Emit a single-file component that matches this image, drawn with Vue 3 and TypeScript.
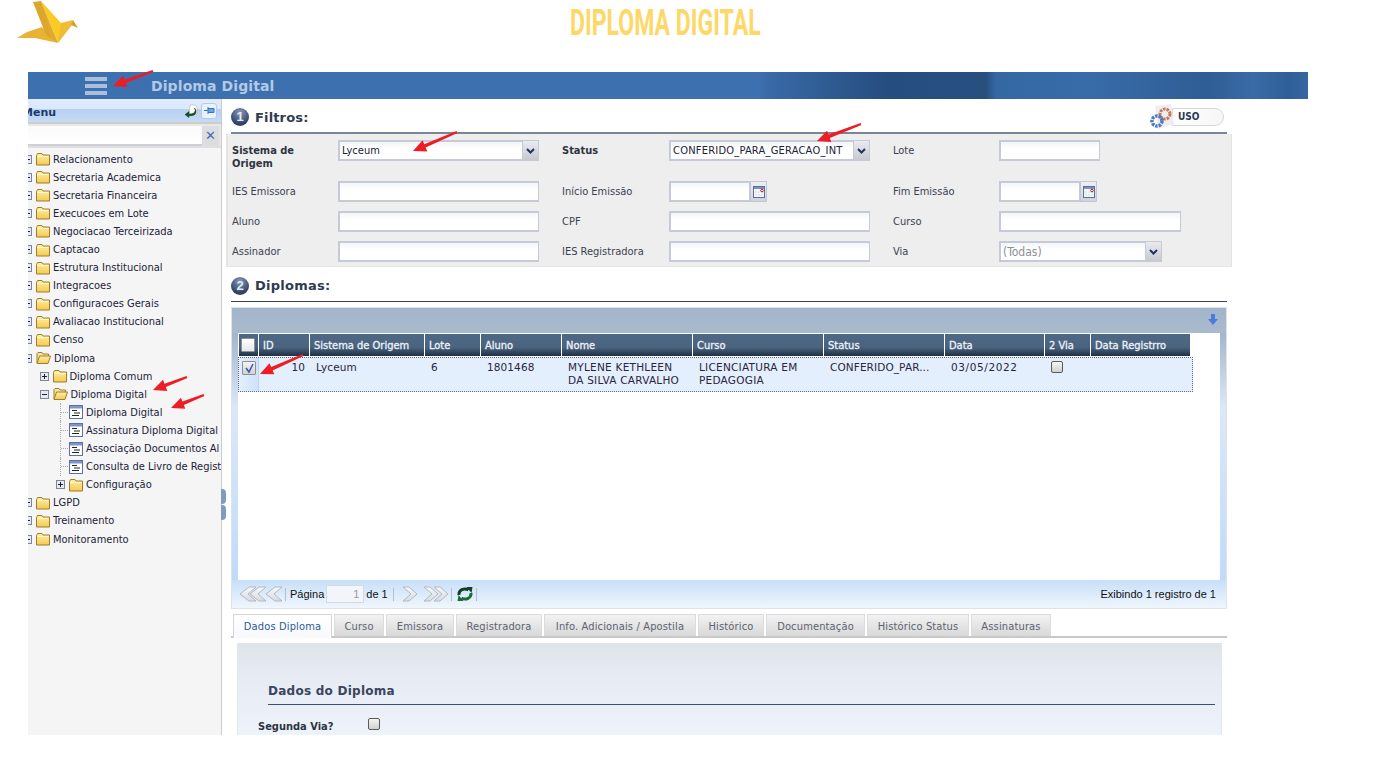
<script setup lang="ts">
interface TreeItem { label: string; level: number; kind: 'closed' | 'open' | 'doc' }
const tree: TreeItem[] = [
  ...['Relacionamento','Secretaria Academica','Secretaria Financeira','Execucoes em Lote','Negociacao Terceirizada','Captacao','Estrutura Institucional','Integracoes','Configuracoes Gerais','Avaliacao Institucional','Censo'].map(label => ({ label, level: 0, kind: 'closed' as const })),
  { label: 'Diploma', level: 0, kind: 'open' },
  { label: 'Diploma Comum', level: 1, kind: 'closed' },
  { label: 'Diploma Digital', level: 1, kind: 'open' },
  { label: 'Diploma Digital', level: 2, kind: 'doc' },
  { label: 'Assinatura Diploma Digital', level: 2, kind: 'doc' },
  { label: 'Associação Documentos Al', level: 2, kind: 'doc' },
  { label: 'Consulta de Livro de Registros', level: 2, kind: 'doc' },
  { label: 'Configuração', level: 2, kind: 'closed' },
  { label: 'LGPD', level: 0, kind: 'closed' },
  { label: 'Treinamento', level: 0, kind: 'closed' },
  { label: 'Monitoramento', level: 0, kind: 'closed' },
]
const headers = ['ID','Sistema de Origem','Lote','Aluno','Nome','Curso','Status','Data','2 Via','Data Registrro']
const tabs = [
  { t: 'Dados Diploma', w: 99 }, { t: 'Curso', w: 50 }, { t: 'Emissora', w: 68 }, { t: 'Registradora', w: 86 },
  { t: 'Info. Adicionais / Apostila', w: 152 }, { t: 'Histórico', w: 66 }, { t: 'Documentação', w: 99 },
  { t: 'Histórico Status', w: 102 }, { t: 'Assinaturas', w: 80 },
]
const arrows: [number, number, number, number][] = [
  [153, 71, 113, 86], [457, 132, 413, 151], [861, 124, 817, 141],
  [303, 355, 260, 374], [187, 377, 153, 390], [204, 395, 171, 408],
]
function arrowPoints(a: [number, number, number, number]): string {
  const [x1, y1, x2, y2] = a
  const len = Math.hypot(x2 - x1, y2 - y1)
  const ux = (x2 - x1) / len, uy = (y2 - y1) / len
  const nx = -uy, ny = ux
  const bx = x2 - ux * 13, by = y2 - uy * 13
  const p = (x: number, y: number) => `${x.toFixed(1)},${y.toFixed(1)}`
  return [
    p(x1 + nx * 1, y1 + ny * 1), p(bx + nx * 1.8, by + ny * 1.8), p(bx + nx * 6, by + ny * 6),
    p(x2, y2), p(bx - nx * 6, by - ny * 6), p(bx - nx * 1.8, by - ny * 1.8), p(x1 - nx * 1, y1 - ny * 1),
  ].join(' ')
}
</script>

<template>
  <div class="page">
    <svg class="defs" width="0" height="0">
      <defs>
        <linearGradient id="folderFill" x1="0" y1="0" x2="0" y2="1">
          <stop offset="0" stop-color="#fff0a8" />
          <stop offset="1" stop-color="#f5c94e" />
        </linearGradient>
        <linearGradient id="chev" x1="0" y1="0" x2="0" y2="1">
          <stop offset="0" stop-color="#f6f7f8" />
          <stop offset="1" stop-color="#d9dcdf" />
        </linearGradient>
      </defs>
    </svg>
    <header class="brand">
      <svg class="logo" width="62" height="44" viewBox="17 0 62 44">
        <polygon points="17,38 27,32 42,27 48,34 58,43 35,38" fill="#e9b235" />
        <polygon points="33,2 41,1 55,41 46,35" fill="#dca52b" />
        <polygon points="41,1 61,23 64,31 58,43" fill="#fbcb25" />
        <polygon points="41,1 58,43 51,39" fill="#e0aa2e" />
        <polygon points="58,43 61,23 73,20 72,25" fill="#f0bb36" />
        <polygon points="73,20 78,28 71,25" fill="#d79f2b" />
      </svg>
      <h1 class="brand-title"><span>DIPLOMA DIGITAL</span></h1>
    </header>

    <div class="app">
      <div class="topbar">
        <div class="burger"><i></i><i></i><i></i></div>
        <div class="topbar-title">Diploma Digital</div>
      </div>
      <div class="body">
        <aside class="side">
          <div class="side-head">
            <span class="side-title">Menu</span>
            <svg class="s-ico" width="14" height="14" viewBox="0 0 14 14"><path d="M6 1h5l2 2v7H5z" fill="#fff" stroke="#bbb" stroke-width=".7"/><path d="M10.500 4c2 4-1 6.500-5.500 6V7.500L1 10.500 5 13.500V11.500C10 12.500 14.500 9 10.500 4z" fill="#12561f" stroke="#0c3a15" stroke-width=".5"/></svg>
            <span class="pin"><svg width="11" height="9" viewBox="0 0 11 9"><path d="M4 1v7M4 2.500h6v4H4M0 4.500h4" stroke="#2e77c5" fill="#6ea5de" stroke-width="1"/></svg></span>
          </div>
          <div class="side-search">
            <div class="side-input"></div>
            <div class="side-x">✕</div>
          </div>
          <div class="tree">
            <div v-for="(n, i) in tree" :key="i" class="node" :style="{ paddingLeft: n.level * 16.5 + 'px' }">
              <svg v-if="n.kind !== 'doc'" class="exp" width="9" height="9" viewBox="0 0 9 9">
                <rect x=".5" y=".5" width="8" height="8" fill="#e6e9f2" stroke="#7c8599" />
                <path :d="n.kind === 'closed' ? 'M2 4.500h5M4.500 2v5' : 'M2 4.500h5'" stroke="#222" />
              </svg>
              <span v-else class="stem"></span>
              <svg v-if="n.kind === 'doc'" class="nicon" width="14" height="14" viewBox="0 0 14 14">
                <rect x=".5" y=".5" width="13" height="13" fill="#fff" stroke="#5c6fa8" />
                <rect x="1" y="1" width="12" height="2.500" fill="#7f95c9" />
                <path d="M3 5.500h5M5 8h6M3 10.500h7" stroke="#222" />
              </svg>
              <svg v-else-if="n.kind === 'closed'" class="nicon" width="14" height="14" viewBox="0 0 14 14">
                <path d="M.5 3.500 1.500 1.500H6L7 3H13.500V13H.5z" fill="url(#folderFill)" stroke="#9c7e2c" />
                <path d="M1.500 4.500H12.500" stroke="#fff8d0" />
              </svg>
              <svg v-else class="nicon" width="15" height="14" viewBox="0 0 15 14">
                <path d="M1 12V2.500L2 1.500H6L7 3H12.500V5" fill="#f6e3a4" stroke="#9c7e2c" />
                <path d="M1 12.500 3.500 5H14.500L12 12.500z" fill="url(#folderFill)" stroke="#9c7e2c" />
              </svg>
              <span class="nlabel">{{ n.label }}</span>
            </div>
          </div>
        </aside>

        <span class="grip"><i></i><i></i></span>

        <main class="main">
          <div class="sec-head filters-head">
            <span class="num">1</span><span class="sec-title t-filtros">Filtros:</span>
            <div class="uso">
              <svg class="uso-ico" width="28" height="26" viewBox="0 0 28 26">
                <path d="M5 2 21 0 24 20 8 25z" fill="#eceef2" />
                <circle cx="15" cy="10" r="5" fill="none" stroke="#c7765a" stroke-width="3" stroke-dasharray="2.500 1" />
                <circle cx="7" cy="17" r="5" fill="none" stroke="#4f78c0" stroke-width="3.500" stroke-dasharray="2.500 1" />
              </svg>
              <span class="uso-pill">USO</span>
            </div>
          </div>
          <section class="filters">
            <label class="lb strong">Sistema de Origem</label>
            <div class="sel w201"><span class="sel-text">Lyceum</span><span class="drop"><svg width="9" height="6" viewBox="0 0 9 6"><path d="M1 1 4.500 4.500 8 1" fill="none" stroke="#1c3466" stroke-width="2"/></svg></span></div>
            <label class="lb strong">Status</label>
            <div class="sel w201"><span class="sel-text spaced">CONFERIDO_PARA_GERACAO_INT</span><span class="drop"><svg width="9" height="6" viewBox="0 0 9 6"><path d="M1 1 4.500 4.500 8 1" fill="none" stroke="#1c3466" stroke-width="2"/></svg></span></div>
            <label class="lb">Lote</label>
            <div class="inp w101"></div>

            <label class="lb">IES Emissora</label>
            <div class="inp w201"></div>
            <label class="lb">Início Emissão</label>
            <div class="date"><div class="inp w81"></div><span class="cal"><svg width="12" height="12" viewBox="0 0 12 12"><rect x=".5" y=".5" width="11" height="11" fill="#fff" stroke="#5b6f96"/><rect x="1" y="1" width="10" height="2" fill="#7c93bc"/><path d="M3 3v8M6 3v8M9 3v8M1 6h10M1 9h10" stroke="#cdd4e2" stroke-width=".6"/><circle cx="9" cy="4.500" r="1.300" fill="#fff" stroke="#96202c"/></svg></span></div>
            <label class="lb">Fim Emissão</label>
            <div class="date"><div class="inp w81"></div><span class="cal"><svg width="12" height="12" viewBox="0 0 12 12"><rect x=".5" y=".5" width="11" height="11" fill="#fff" stroke="#5b6f96"/><rect x="1" y="1" width="10" height="2" fill="#7c93bc"/><path d="M3 3v8M6 3v8M9 3v8M1 6h10M1 9h10" stroke="#cdd4e2" stroke-width=".6"/><circle cx="9" cy="4.500" r="1.300" fill="#fff" stroke="#96202c"/></svg></span></div>

            <label class="lb">Aluno</label>
            <div class="inp w201"></div>
            <label class="lb">CPF</label>
            <div class="inp w201"></div>
            <label class="lb">Curso</label>
            <div class="inp w182"></div>

            <label class="lb">Assinador</label>
            <div class="inp w201"></div>
            <label class="lb">IES Registradora</label>
            <div class="inp w201"></div>
            <label class="lb">Via</label>
            <div class="sel w163"><span class="sel-text muted">(Todas)</span><span class="drop"><svg width="9" height="6" viewBox="0 0 9 6"><path d="M1 1 4.500 4.500 8 1" fill="none" stroke="#1c3466" stroke-width="2"/></svg></span></div>
          </section>

          <div class="sec-head diplomas-head">
            <span class="num">2</span><span class="sec-title t-diplomas">Diplomas:</span>
          </div>
          <section class="grid-panel">
            <div class="grid-top">
              <svg width="10" height="11" viewBox="0 0 10 11"><path d="M3 0h4v5h3L5 11 0 5h3z" fill="#4a7bdc"/></svg>
            </div>
            <div class="grid-body">
              <div class="thead cols">
                <div class="th th-check"><span class="cb head-cb"></span></div>
                <div v-for="h in headers" :key="h" class="th">{{ h }}</div>
              </div>
              <div class="trow cols">
                <div class="td td-check"><span class="cb"><svg width="11" height="11" viewBox="0 0 11 11"><path d="M2 5 5 9 9 1" fill="none" stroke="#3a5bb0" stroke-width="1.600"/></svg></span></div>
                <div class="td td-id">10</div>
                <div class="td">Lyceum</div>
                <div class="td">6</div>
                <div class="td">1801468</div>
                <div class="td td-wrap">MYLENE KETHLEEN DA SILVA CARVALHO</div>
                <div class="td td-wrap">LICENCIATURA EM PEDAGOGIA</div>
                <div class="td">CONFERIDO_PAR...</div>
                <div class="td td-date">03/05/2022</div>
                <div class="td td-via"><span class="cb small"></span></div>
                <div class="td"></div>
              </div>
            </div>
            <div class="pager">
              <div class="pg-left">
                <svg width="43" height="16" viewBox="0 0 43 16"><path v-for="x in [26,10,0]" :key="x" :d="`M${x+9} 1 ${x} 8 ${x+9} 15h7l-8-7 8-7z`" fill="url(#chev)" stroke="#b3b8bf"/></svg>
                <span class="sep sep-a"></span>
                <span class="pg-txt">Página</span>
                <span class="pg-input">1</span>
                <span class="pg-txt">de 1</span>
                <span class="sep"></span>
                <svg class="next" width="16" height="16" viewBox="0 0 16 16"><path d="M7 1 15 8 7 15H1l8-7-8-7z" fill="url(#chev)" stroke="#b3b8bf"/></svg>
                <svg class="next2" width="26" height="16" viewBox="0 0 26 16"><path v-for="x in [0,10]" :key="x" :d="`M${x+7} 1 ${x+15} 8 ${x+7} 15H${x+1}l8-7-8-7z`" fill="url(#chev)" stroke="#b3b8bf"/></svg>
                <span class="sep sep-b"></span>
                <svg width="18" height="16" viewBox="0 0 18 16">
                  <path d="M3 9C2.500 4 8 1.500 12.500 4" fill="none" stroke="#123f22" stroke-width="3" />
                  <path d="M10.500 1 16.500 1 15.500 7z" fill="#123f22" />
                  <path d="M15 7C15.500 12 10 14.500 5.500 12" fill="none" stroke="#1c6a35" stroke-width="3" />
                  <path d="M7.500 15 1.500 15 2.500 9z" fill="#1c6a35" />
                </svg>
                <span class="sep sep-c"></span>
              </div>
              <span class="pg-count">Exibindo 1 registro de 1</span>
            </div>
          </section>

          <nav class="tabs">
            <div v-for="(t, i) in tabs" :key="t.t" class="tab" :class="{ active: i === 0 }" :style="{ width: t.w + 'px' }">{{ t.t }}</div>
          </nav>
          <section class="detail">
            <div class="detail-title">Dados do Diploma</div>
            <div class="detail-row">
              <span class="detail-label">Segunda Via?</span>
              <span class="cb small"></span>
            </div>
          </section>
        </main>
      </div>
    </div>

    <svg class="arrows" width="1382" height="773" viewBox="0 0 1382 773">
      <polygon v-for="(a, i) in arrows" :key="i" :points="arrowPoints(a)" fill="#ee1c25" />
    </svg>
  </div>
</template>

<style>
html, body { margin: 0; background: #fff; overflow: hidden; }
</style>

<style scoped>
.page { position: relative; width: 1382px; height: 773px; overflow: hidden; background: #fff; font-family: "DejaVu Sans Condensed", "DejaVu Sans", sans-serif; color: #222; font-size: 11px; }
.defs { position: absolute; }
.brand { height: 72px; display: flex; align-items: flex-start; padding-left: 17px; box-sizing: border-box; }
.logo { flex: none; }
.brand-title { margin: 2px 0 0 491px; font: 700 36px/42px Roboto, "Liberation Sans", sans-serif; color: #fdd868; white-space: nowrap; width: 189px; }
.brand-title span { display: inline-block; transform: scaleX(.64); transform-origin: left center; }

.app { margin-left: 28px; width: 1280px; height: 663px; overflow: hidden; display: flex; flex-direction: column; }
.topbar { flex: none; height: 27px; display: flex; align-items: center; box-sizing: border-box;
  background: linear-gradient(90deg, #3d70ae 0, #3d70ae 732px, #386aa6 740px, #264d80 860px, #27507f 958px, #3468a3 968px, #386ca8 1060px, #2f5d95 1180px, #3a6ba6 1225px, #2f5f98 1260px, #35669f 1280px); }
.burger { margin-left: 57px; width: 22px; display: flex; flex-direction: column; gap: 3px; }
.burger i { display: block; height: 4px; background: #a9bfdc; }
.topbar-title { margin-left: 44px; color: #b4c9e4; font: 700 14px/20px "DejaVu Sans", sans-serif; letter-spacing: .1px; }

.body { flex: 1; min-height: 0; display: flex; }
.side { flex: none; width: 194px; background: #f5f5f5; border-right: 1px solid #c9cbce; box-sizing: border-box; overflow: hidden; }
.side-head { height: 25px; box-sizing: border-box; display: flex; align-items: center; border-bottom: 2px solid #ccc; background: linear-gradient(#e0ecfb 0, #dae8fa 44%, #b8d1f1 45%, #c5daf5 100%); }
.side-title { margin-left: -6px; padding-top: 3px; font: 700 11px "DejaVu Sans", sans-serif; color: #1d3a6c; flex: 1; }
.s-ico { margin-right: 3px; }
.pin { width: 14px; height: 14px; margin-right: 4px; border: 1px solid #b7cbe3; border-radius: 3px; background: #eaf2fb; display: flex; align-items: center; justify-content: center; }
.side-search { height: 24px; box-sizing: border-box; display: flex; padding-top: 2px; border-bottom: 2px solid #dfdfdf; background: #e8e8e8; }
.side-input { flex: 1; height: 18px; background: linear-gradient(#fafafa, #fff); border-bottom: 2px solid #cfcfd8; }
.side-x { width: 17px; height: 20px; margin-right: 2px; background: #dcdde0; color: #3f6ea8; font: 700 13px/20px "DejaVu Sans", sans-serif; text-align: center; }
.tree { padding-top: 2px; margin-left: -5px; }
.node { height: 18.100px; display: flex; align-items: center; white-space: nowrap; }
.exp { flex: none; width: 9px; height: 9px; margin-right: 4px; }
.stem { flex: none; box-sizing: border-box; width: 9px; margin-right: 4px; height: 18px; border-left: 1px dotted #aaa; transform: translateX(4px);
  background: repeating-linear-gradient(90deg, #aaa 0 1px, transparent 1px 2px) left center / 100% 1px no-repeat; }
.nicon { flex: none; margin-right: 3px; }
.nlabel { font-size: 11px; color: #1b2238; }

.grip { flex: none; position: relative; width: 0; }
.grip i { position: absolute; left: -1px; width: 5px; height: 15px; background: #7f9cc0; border-radius: 0 4px 4px 0; }
.grip i:first-child { top: 390px; }
.grip i:last-child { top: 406px; }

.main { flex: none; width: 1010px; padding-left: 4px; box-sizing: border-box; }
.sec-head { display: flex; align-items: center; margin-left: 5px; width: 996px; box-sizing: border-box; }
.filters-head { height: 35px; border-bottom: 2px solid #7b8598; padding-top: 3px; }
.diplomas-head { height: 35px; border-bottom: 1px solid #3c4250; padding-top: 3px; }
.num { width: 18px; height: 18px; border-radius: 50%; background: radial-gradient(circle at 50% 25%, #8b9bb6, #2e4169 70%); color: #e6ebf5; font: 700 13px/18px "Liberation Sans", sans-serif; text-align: center; flex: none; }
.sec-title { margin-left: 6px; font: 700 13px "DejaVu Sans", sans-serif; color: #2f3b52; }
.t-filtros { letter-spacing: .15px; }
.t-diplomas { letter-spacing: .25px; }
.uso { margin-left: auto; margin-right: 3px; display: flex; align-items: center; }
.uso-ico { margin-right: -6px; position: relative; z-index: 1; }
.uso-pill { width: 52px; height: 18px; box-sizing: border-box; border: 1px solid #d8d8d8; border-radius: 0 9px 9px 0; background: linear-gradient(90deg, #fff, #f6f6f6); font: 700 10px/16px "DejaVu Sans Condensed", "DejaVu Sans", sans-serif; color: #2c3a56; padding-left: 5px; }

.filters { width: 1006px; height: 133px; box-sizing: border-box; padding: 6px 0 0 4px; background: #eee; border: 1px solid #e4e4e4; border-top: 0; border-left: 2px solid #e4e4e4; display: grid; grid-template-columns: 106px 224px 107px 224px 106px 1fr; grid-template-rows: 32px 21px 21px 21px; row-gap: 9px; align-items: start; }
.lb { font-size: 11px; line-height: 13px; color: #3b4252; padding-top: 4px; white-space: nowrap; }
.lb.strong { font: 700 11px/13px "DejaVu Sans Condensed", "DejaVu Sans", sans-serif; color: #2e3442; padding-top: 4px; padding-right: 30px; white-space: normal; }
.inp { height: 21px; box-sizing: border-box; border: 2px solid #c6c9d8; border-right-width: 1px; background: linear-gradient(#f4f5f7, #fff 40%); }
.w201 { width: 201px; } .w101 { width: 101px; } .w81 { width: 81px; } .w182 { width: 182px; } .w163 { width: 163px; }
.sel { height: 21px; box-sizing: border-box; display: flex; border: 2px solid #c6c9d8; border-right: 0; background: linear-gradient(#f4f5f7, #fff 40%); }
.sel-text { flex: 1; font-size: 11px; line-height: 18px; padding-left: 2px; color: #1b2238; white-space: nowrap; overflow: hidden; }
.sel-text.spaced { letter-spacing: .22px; }
.sel-text.muted { color: #8c8f96; font-size: 12px; }
.drop { flex: none; width: 17px; height: 21px; margin-top: -2px; border: 1px solid #c6c9d8; background: linear-gradient(#e9ebf0, #c7c9ce); display: flex; align-items: center; justify-content: center; box-sizing: border-box; }
.date { display: flex; }
.cal { width: 17px; height: 21px; box-sizing: border-box; border: 1px solid #c0c6d6; background: linear-gradient(#eef0f5, #cfd2d9); display: flex; align-items: center; justify-content: center; }

.grid-panel { margin: 5px 0 0 5px; width: 996px; height: 302px; box-sizing: border-box; border: 1px solid #dfe3e8; display: flex; flex-direction: column; background: linear-gradient(#a4b5ca 0, #a4b5ca 25px, #dbe8f8 100px, #bcd8fb 100%); }
.grid-top { height: 25px; flex: none; display: flex; justify-content: flex-end; align-items: center; padding: 0 8px 2px 0; box-sizing: border-box; background: linear-gradient(#a3b5cb, #a9bace); }
.grid-body { flex: 1; margin: 0 6px; background: #fff; padding: 1px 0 0 1px; min-height: 0; }
.cols { display: grid; grid-template-columns: 20px 51px 115px 56px 81px 131px 131px 121px 100px 46px 100px; }
.thead { width: 952px; height: 22px; }
.th { height: 22px; box-sizing: border-box; border-right: 1px solid #fff; background: linear-gradient(#4d6885 0, #4a6480 60%, #1f3044 100%); color: #eef2f7; font: 400 11px/23px "DejaVu Sans Condensed", "DejaVu Sans", sans-serif; -webkit-text-stroke: .3px #eef2f7; padding-left: 4px; white-space: nowrap; overflow: hidden; }
.th-check { padding: 4px 0 0 2px; }
.cb { display: inline-flex; width: 14px; height: 14px; box-sizing: border-box; border: 1px solid #8b8f98; border-radius: 1px; background: linear-gradient(#f4f4f4, #d2d2d2); align-items: center; justify-content: center; vertical-align: top; }
.head-cb { background: linear-gradient(#fff, #e6e6e6); }
.cb.small { width: 12px; height: 12px; border-radius: 2px; border-color: #5a5a5a; }
.trow { width: 955px; height: 35px; box-sizing: border-box; border: 1px dotted #5b6a85; background: #e3effd; margin-top: 1px; margin-left: -1px; }
.td { font: 10.500px/13px "DejaVu Sans", sans-serif; color: #2a2440; padding: 3px 6px 0 6px; overflow: hidden; letter-spacing: .1px; }
.td-wrap { letter-spacing: .25px; padding-right: 8px; }
.td-date { letter-spacing: .6px; }
.td-check { padding: 3px 0 0 3px; background: linear-gradient(90deg, #e3effd, #cfe2fa); border-right: 1px solid #bcd4f3; }
.td-id { text-align: right; padding-right: 5px; }
.td-via { padding: 3px 0 0 6px; }
.pager { flex: none; height: 28px; display: flex; align-items: center; justify-content: space-between; padding: 0 10px 0 8px; background: linear-gradient(#c7dff9, #f0f6fd); font-family: "Liberation Sans", sans-serif; font-size: 11px; color: #111; }
.pg-left { display: flex; align-items: center; }
.sep { width: 1px; height: 13px; background: #b9bec6; margin: 0 4px 0 5px; }
.sep-a { margin: 0 4px 0 2px; }
.sep-b { margin: 0 4px 0 2px; }
.sep-c { margin: 0 0 0 2px; }
.pg-txt { font-family: "Liberation Sans", sans-serif; }
.pg-input { width: 38px; height: 18px; box-sizing: border-box; margin: 0 2px; border: 1px solid #d2dae4; background: #f2f6fb; color: #999; text-align: right; padding: 2px 4px 0 0; }
.next { margin: 0 5px 0 4px; }
.pg-count { color: #111; }

.tabs { margin: 5px 0 0 5px; width: 996px; height: 24px; box-sizing: border-box; border-bottom: 2px solid #c8c8c8; display: flex; gap: 2px; padding-left: 2px; align-items: flex-start; }
.tab { height: 22px; box-sizing: border-box; background: linear-gradient(#f2f2f2, #d8d8d8); border: 1px solid #dcdcdc; border-bottom: 0; color: #5c6270; font-size: 11px; line-height: 24px; letter-spacing: .15px; text-align: center; flex: none; white-space: nowrap; }
.tab.active { height: 24px; background: linear-gradient(#fff, #f7f9fc); color: #2b5a9a; border-color: #d6d6d6; }
.detail { margin: 5px 0 0 11px; width: 985px; height: 100px; box-sizing: border-box; border: 1px solid #e3e6ea; border-top: 0; padding: 41px 6px 0 0; background: linear-gradient(#dfe3ea, #e8ecf4 40%, #eef4fc 100%); }
.detail-title { margin-left: 30px; height: 20px; border-bottom: 1px solid #3d4f72; font: 700 12px/15px "DejaVu Sans", sans-serif; letter-spacing: .25px; color: #3a4560; }
.detail-row { display: flex; align-items: center; margin: 9px 0 0 20px; }
.detail-label { width: 110px; font: 700 11px/14px "DejaVu Sans Condensed", "DejaVu Sans", sans-serif; color: #2e3442; padding-top: 6px; }

.arrows { position: absolute; left: 0; top: 0; pointer-events: none; }
</style>
